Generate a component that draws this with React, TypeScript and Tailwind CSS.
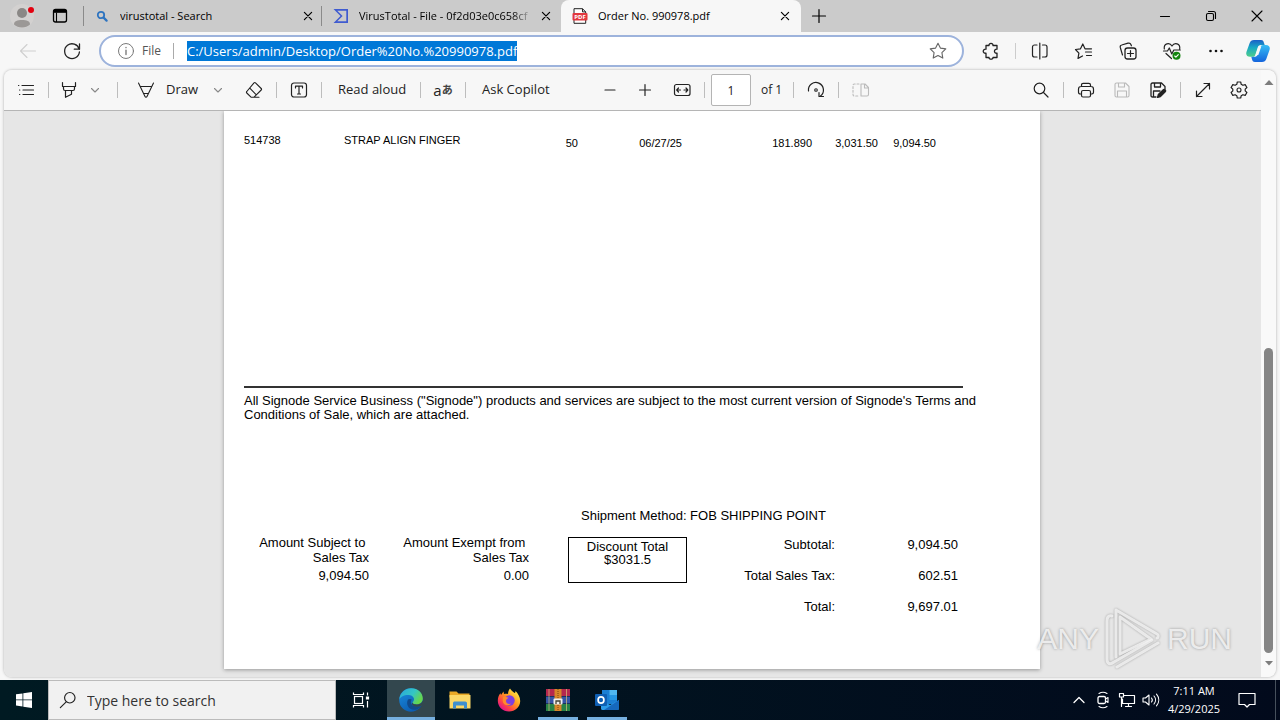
import type { ReactNode } from "react";

type IconProps = { children: ReactNode; className?: string; box?: string };

function Icon({ children, className = "size-5", box = "0 0 20 20" }: IconProps) {
  return (
    <svg
      viewBox={box}
      className={`${className} block shrink-0`}
      fill="none"
      stroke="currentColor"
      strokeWidth={1.1}
      strokeLinecap="round"
      strokeLinejoin="round"
      aria-hidden="true"
    >
      {children}
    </svg>
  );
}

function Tool({ label, className = "", children }: { label: string; className?: string; children: ReactNode }) {
  return (
    <button type="button" aria-label={label} className={`flex shrink-0 items-center justify-center ${className}`}>
      {children}
    </button>
  );
}

function Sep({ className = "" }: { className?: string }) {
  return <span className={`w-px shrink-0 ${className}`} />;
}

const CloseGlyph = () => (
  <Icon className="size-3">
    <path d="M4 4l12 12M16 4L4 16" strokeWidth={2} />
  </Icon>
);

const Chevron = () => (
  <Icon className="size-[10px]" box="0 0 10 10">
    <path d="M1.500 3.500L5 7l3.500-3.500" stroke="#888" />
  </Icon>
);

function TitleBar() {
  return (
    <header className="flex h-8 shrink-0 items-center bg-[#cbcbcb] text-black">
      <Tool label="Profile" className="ml-2.5">
        <svg viewBox="0 0 28 28" className="size-7" aria-hidden="true">
          <circle cx="12" cy="14" r="12" fill="#d3d1d0" />
          <circle cx="12" cy="11" r="5" fill="#8b8886" />
          <path d="M4 22.500c0-3.600 3.300-4.500 8-4.500s8 .9 8 4.500c-2 1.900-4.900 2.900-8 2.900s-6-1-8-2.900z" fill="#9b9896" />
          <circle cx="21" cy="8" r="3" fill="#e3000f" />
        </svg>
      </Tool>
      <Tool label="Tab actions" className="ml-3">
        <Icon>
          <rect x="3.500" y="3.500" width="13" height="12.500" rx="2" strokeWidth={1.3} />
          <path d="M4 4.500h12v1.800H4z" fill="currentColor" />
          <path d="M6.500 7v8.500" />
        </Icon>
      </Tool>
      <Sep className="ml-[13px] h-5 bg-[#8a8a8a]" />
      <div className="ml-3 flex w-[225px] items-center">
        <Icon className="size-3" box="0 0 12 12">
          <circle cx="5" cy="5" r="3.200" stroke="#2e74c0" strokeWidth={1.8} />
          <path d="M7.600 7.600L10.600 10.600" stroke="#2e74c0" strokeWidth={2.200} />
        </Icon>
        <span className="ml-3 flex-1 truncate text-[11px]">virustotal - Search</span>
        <Tool label="Close tab" className="mr-[7px]">
          <CloseGlyph />
        </Tool>
      </div>
      <Sep className="h-5 bg-[#8a8a8a]" />
      <div className="flex w-[239px] items-center pl-[11px]">
        <Icon className="size-4" box="0 0 16 16">
          <path d="M.5 1h14.500v14H.5l7-7z" fill="#3f5bd0" stroke="none" />
          <path d="M4.300 2.700h9v10.600h-9L9.600 8z" fill="#cbcbcb" stroke="none" />
        </Icon>
        <span className="ml-2.5 w-[174px] text-[11px] whitespace-nowrap [mask-image:linear-gradient(to_right,#000_88%,transparent)]">
          VirusTotal - File - 0f2d03e0c658cf
        </span>
        <Tool label="Close tab" className="ml-[7px]">
          <CloseGlyph />
        </Tool>
      </div>
      <div className="flex h-8 w-[240px] items-center rounded-t-lg bg-[#f7f7f7] pl-[11px]">
        <svg viewBox="0 0 16 16" className="size-4 shrink-0" aria-hidden="true">
          <path d="M2 .7h8.500l3.200 3.200v11.400H2z" fill="#fff" stroke="#222" />
          <path d="M10.500.7v3.200h3.200" fill="none" stroke="#222" />
          <rect x=".5" y="5" width="15" height="7.500" rx="1" fill="#e2383f" />
          <text x="8" y="11" textAnchor="middle" fontSize="6" fontWeight="bold" fill="#fff">
            PDF
          </text>
        </svg>
        <span className="ml-2.5 flex-1 text-[11px]">Order No. 990978.pdf</span>
        <Tool label="Close tab" className="mr-2.5">
          <CloseGlyph />
        </Tool>
      </div>
      <Tool label="New tab" className="ml-2.5">
        <Icon className="size-4" box="0 0 16 16">
          <path d="M8 1.500v13M1.500 8h13" strokeWidth={1.200} />
        </Icon>
      </Tool>
      <div className="mr-[17px] ml-auto flex items-center gap-[34px]">
        <Tool label="Minimize">
          <Icon className="size-3" box="0 0 12 12">
            <path d="M1.500 6.500h9" />
          </Icon>
        </Tool>
        <Tool label="Restore">
          <Icon className="size-3" box="0 0 12 12">
            <rect x="1.500" y="3.500" width="7" height="7" rx="1.500" />
            <path d="M3.500 1.500h5c1.200 0 2 .8 2 2v5" />
          </Icon>
        </Tool>
        <Tool label="Close window">
          <Icon className="size-3" box="0 0 12 12">
            <path d="M1 1l10 10M11 1L1 11" />
          </Icon>
        </Tool>
      </div>
    </header>
  );
}

function AddressBar() {
  return (
    <div className="flex h-[38px] shrink-0 items-center bg-[#f7f7f7] text-[#222]">
      <Tool label="Back" className="ml-[18px] text-[#cfcfcf]">
        <Icon>
          <path d="M17.500 10h-15M9 3.500L2.500 10 9 16.500" />
        </Icon>
      </Tool>
      <Tool label="Refresh" className="ml-6">
        <Icon>
          <path d="M17.200 8.300A7.400 7.400 0 1 0 17.400 11M17.500 3v5.200h-5.200" strokeWidth={1.300} />
        </Icon>
      </Tool>
      <div className="ml-[17px] flex h-8 flex-1 items-center rounded-full border-2 border-[#9db3dc] bg-white">
        <Icon className="ml-4 size-[18px]">
          <g stroke="#777">
            <circle cx="10" cy="10" r="8.300" />
            <path d="M10 9v5M10 6v.3" strokeWidth={1.500} />
          </g>
        </Icon>
        <label htmlFor="address" className="ml-[7px] w-5 text-[12px] text-[#555]">
          File
        </label>
        <Sep className="ml-[11px] h-4 bg-[#aaa]" />
        <input
          id="address"
          readOnly
          value="C:/Users/admin/Desktop/Order%20No.%20990978.pdf"
          className="ml-[13px] h-5 field-sizing-content bg-[#0078d7] text-[13px] text-white outline-none"
        />
        <Tool label="Add to favorites" className="mr-[14px] ml-auto text-[#666]">
          <Icon>
            <path d="M10 2.200l2.400 4.900 5.400.8-3.900 3.800.9 5.400-4.800-2.600-4.800 2.600.9-5.400-3.900-3.800 5.400-.8z" />
          </Icon>
        </Tool>
      </div>
      <Tool label="Extensions" className="ml-[17px]">
        <Icon>
          <path
            d="M5 4.500h3c-.5-2.800 4.500-2.800 4 0h4v3.700c-3.400-.4-3.400 4.400 0 4v4.300h-4c.3 2.200-4.300 2.200-4 0H5v-4.300c-3.700.4-3.700-4.400 0-4z"
            strokeWidth={1.300}
          />
        </Icon>
      </Tool>
      <Sep className="ml-3.5 h-4 bg-[#ccc]" />
      <div className="ml-3.5 flex items-center gap-6">
        <Tool label="Split screen">
          <Icon>
            <path d="M7 4H4.500A2 2 0 0 0 2.500 6v8a2 2 0 0 0 2 2H7M12.500 4h2.500a2 2 0 0 1 2 2v8a2 2 0 0 1-2 2h-2.500M9.800 2v16" strokeWidth={1.200} />
          </Icon>
        </Tool>
        <Tool label="Favorites">
          <Icon>
            <path d="M8.500 15l-4.500 2.400.9-5.200L1.500 8.500l5-.7L8.800 3l2.200 4.800H17.500M11.500 11h6M12.500 14.500h5" strokeWidth={1.200} />
          </Icon>
        </Tool>
        <Tool label="Collections">
          <Icon>
            <rect x="7" y="7" width="11" height="11" rx="2.500" strokeWidth={1.300} />
            <path d="M12.500 9.500v6M9.500 12.500h6M4.500 14L2.300 6.500C2 5.300 2.500 4.300 3.700 4L10 2.200c1.500-.4 2.500.2 2.900 1.300l.5 1.300" strokeWidth={1.200} />
          </Icon>
        </Tool>
        <Tool label="Browser essentials">
          <Icon>
            <path d="M2.300 8C1.500 2.500 7.500 1 10 5c2.500-4 8.500-2.500 7.700 3M1.500 10h4l1.800-3 2.500 6 2-4h6.500M4 12.500l5.500 5" strokeWidth={1.200} />
            <circle cx="14.500" cy="14.800" r="4" fill="#13850f" stroke="none" />
            <path d="M12.700 15l1.200 1.200 2.400-2.600" stroke="#fff" />
          </Icon>
        </Tool>
        <Tool label="Settings and more">
          <Icon>
            <g fill="#111" stroke="none">
              <circle cx="4.500" cy="10" r="1.300" />
              <circle cx="10" cy="10" r="1.300" />
              <circle cx="15.500" cy="10" r="1.300" />
            </g>
          </Icon>
        </Tool>
      </div>
      <Tool label="Copilot" className="mr-2.5 ml-5">
        <svg viewBox="0 0 24 24" className="size-6" aria-hidden="true">
          <defs>
            <linearGradient id="cpA" x1="0" y1="0" x2="0" y2="1">
              <stop offset="0" stopColor="#1b5fc8" />
              <stop offset=".45" stopColor="#19a9c4" />
              <stop offset="1" stopColor="#4fce8a" />
            </linearGradient>
            <linearGradient id="cpB" x1="0" y1="0" x2="0" y2="1">
              <stop offset="0" stopColor="#36bdf5" />
              <stop offset="1" stopColor="#1464dc" />
            </linearGradient>
          </defs>
          <path d="M8 1h7c2 0 2.500 1 3 3l.7 2H15c-2 0-2.800 1-3.300 2.500L9.300 16c-.4 1.200-1.200 1.800-2.500 1.800H4c-3 0-4.500-2-3.500-5L3.700 4C4.400 2 5.700 1 8 1z" fill="url(#cpA)" />
          <path d="M16 23H9c-2 0-2.600-1-3.100-3l-.6-2.200H8c2 0 3.200-.8 3.800-2.600L14.500 8c.4-1.300 1.200-2 2.500-2h3c3 0 4.500 2 3.500 5l-3.200 9c-.7 2-2 3-4.300 3z" fill="url(#cpB)" />
          <path d="M12.500 7.500h2.800l-3 8.500H9.500z" fill="#f7f7f7" />
        </svg>
      </Tool>
    </div>
  );
}

function PdfToolbar() {
  const sep = "h-4 bg-[#bdbdbd]";
  return (
    <div className="flex h-[41px] shrink-0 items-center border-b border-[#b5b5b5] bg-[#f7f7f7] text-[13px] text-[#222]">
      <Tool label="Table of contents" className="ml-3">
        <Icon>
          <path d="M6 5.500h11.500M7 10h10.500M7 14.500h10.500M2.500 5.500h.3M3.500 10h.3M3.500 14.500h.3" strokeWidth={1.200} />
        </Icon>
      </Tool>
      <Sep className={`ml-3 ${sep}`} />
      <Tool label="Highlight" className="ml-[10px]">
        <Icon>
          <path d="M3.500 2.500v4h13v-4M4.500 6.500v2.200c0 1 .6 1.800 1.500 1.800h8c.9 0 1.500-.8 1.500-1.800V6.500M6.500 10.500v6.800l6-3v-3.800" strokeWidth={1.200} />
        </Icon>
      </Tool>
      <Tool label="Highlight options" className="ml-[11px]">
        <Chevron />
      </Tool>
      <Sep className={`ml-[17px] ${sep}`} />
      <button type="button" className="ml-[18px] flex shrink-0 items-center gap-[10px]">
        <Icon>
          <path d="M2.500 3L9 16.500c.5 1 1.500 1 2 0L17.500 3M4.500 6.500h11M7.700 13.500h4.600" strokeWidth={1.100} />
        </Icon>
        <span className="w-[34px] text-left">Draw</span>
      </button>
      <Tool label="Draw options" className="ml-[13px]">
        <Chevron />
      </Tool>
      <Tool label="Erase" className="ml-[21px]">
        <Icon>
          <path d="M11.500 2.800l5.700 5.700c.5.500.5 1 0 1.500L10 17.200H7L2.800 13c-.5-.5-.5-1 0-1.500l7.200-8.700c.5-.5 1-.5 1.500 0zM5.800 8.200l6.300 6.500M10 17.200h5" />
        </Icon>
      </Tool>
      <Sep className={`ml-3 ${sep}`} />
      <Tool label="Add text" className="ml-3">
        <Icon>
          <rect x="2.500" y="3" width="15" height="14" rx="2.500" strokeWidth={1.200} />
          <path d="M6.500 8V6.200h7V8M10 6.200v7.800M8.500 14h3" strokeWidth={1.200} />
        </Icon>
      </Tool>
      <Sep className={`ml-3 ${sep}`} />
      <button type="button" className="ml-4 w-[70px] text-left whitespace-nowrap">
        Read aloud
      </button>
      <Sep className={`ml-3 ${sep}`} />
      <Tool label="Translate" className="ml-3 w-5 font-['Open_Sans','Noto_Sans_CJK_JP',sans-serif]">
        <span className="text-[15px] leading-5">a</span>
        <span className="text-[11px] leading-5 font-bold text-[#444]">あ</span>
      </Tool>
      <Sep className={`ml-3 ${sep}`} />
      <button type="button" className="ml-4 w-[72px] text-left whitespace-nowrap">
        Ask Copilot
      </button>
      <Tool label="Zoom out" className="ml-[46px]">
        <Icon>
          <path d="M5 10h10" strokeWidth={1.200} />
        </Icon>
      </Tool>
      <Tool label="Zoom in" className="ml-[15px]">
        <Icon>
          <path d="M10 4.500v11M4.500 10h11" strokeWidth={1.200} />
        </Icon>
      </Tool>
      <Tool label="Fit to width" className="ml-[17px]">
        <Icon>
          <rect x="2.500" y="4.500" width="15.500" height="11" rx="2" strokeWidth={1.200} />
          <path d="M5 10h3.500M12 10h3.500M6.500 8L4.700 10l1.800 2M14 8l1.800 2-1.800 2" strokeWidth={1.200} />
        </Icon>
      </Tool>
      <Sep className={`ml-3 ${sep}`} />
      <input
        aria-label="Page number"
        defaultValue="1"
        className="ml-1.5 h-8 w-10 shrink-0 rounded-xs border border-[#b4b4b4] bg-white text-center text-[12px] outline-none"
      />
      <span className="ml-2.5 w-5 text-[12px] whitespace-nowrap">of 1</span>
      <Sep className={`ml-3 ${sep}`} />
      <Tool label="Rotate" className="ml-3">
        <Icon>
          <path d="M2.500 11A7.500 7.500 0 1 1 14.500 16M13 12.500v4h4.500" strokeWidth={1.200} />
          <circle cx="10" cy="10" r="1.300" />
        </Icon>
      </Tool>
      <Sep className={`ml-3 ${sep}`} />
      <Tool label="Page view" className="ml-3 text-[#bbb]">
        <Icon>
          <path d="M8 4H3.500c-1 0-1.500.5-1.500 1.500v9c0 1 .5 1.500 1.500 1.500H8" strokeDasharray="2 1.800" />
          <path d="M10 4h4l3.500 3.500V14.500c0 1-.5 1.500-1.500 1.500h-6zM13.500 4v4h4" />
        </Icon>
      </Tool>
      <Tool label="Find" className="mr-3 ml-auto">
        <Icon>
          <circle cx="8.500" cy="8.500" r="5.300" strokeWidth={1.200} />
          <path d="M12.500 12.500l4.500 4.500" strokeWidth={1.200} />
        </Icon>
      </Tool>
      <Sep className={sep} />
      <div className="mx-3 flex gap-4">
        <Tool label="Print">
          <Icon>
            <path d="M5.500 6.500V5c0-1 .7-1.700 1.700-1.700h5.600c1 0 1.700.7 1.700 1.700v1.500M5.500 14H4.200c-1 0-1.700-.7-1.700-1.700V9c0-1.500 1-2.500 2.500-2.500h10c1.500 0 2.500 1 2.500 2.500v3.300c0 1-.7 1.700-1.700 1.700h-1.300" strokeWidth={1.200} />
            <rect x="5.500" y="10.500" width="9" height="6.500" rx="1.500" strokeWidth={1.200} />
          </Icon>
        </Tool>
        <Tool label="Save" className="text-[#bababa]">
          <Icon>
            <path d="M4.500 3h9L17 6.500v9c0 1-.5 1.500-1.500 1.500h-11C3.500 17 3 16.500 3 15.500v-11C3 3.500 3.500 3 4.500 3zM6.500 3v4h6V3M5.500 17v-6h9v6" />
          </Icon>
        </Tool>
        <Tool label="Save as">
          <Icon>
            <path d="M8 17H4.500C3.500 17 3 16.500 3 15.500v-11C3 3.500 3.500 3 4.500 3h9L17 6.500V9M6.500 3v4h6V3M5.500 17v-6H12" strokeWidth={1.300} />
            <path d="M9.500 17.500l.8-3 5.200-5c1-.8 3 1 2 2.200l-5 5z" fill="currentColor" />
          </Icon>
        </Tool>
      </div>
      <Sep className={sep} />
      <div className="mx-3 flex gap-4">
        <Tool label="Full screen">
          <Icon>
            <path d="M3.500 16.500l13-13M11 3.500h5.500V9M3.500 11v5.500H9" strokeWidth={1.200} />
          </Icon>
        </Tool>
        <Tool label="Settings">
          <Icon>
            <path
              d="M8.300 2h3.400l.5 2.300 1.700 1 2.300-.7 1.700 2.900-1.700 1.600v1.800l1.700 1.600-1.700 2.900-2.300-.7-1.700 1-.5 2.300H8.300l-.5-2.300-1.700-1-2.300.7-1.700-2.900 1.700-1.600V9.100L2.100 7.500l1.700-2.900 2.300.7 1.700-1z"
              strokeWidth={1.200}
            />
            <circle cx="10" cy="10" r="2" />
          </Icon>
        </Tool>
      </div>
    </div>
  );
}

const totals = [
  ["Subtotal:", "9,094.50"],
  ["Total Sales Tax:", "602.51"],
  ["Total:", "9,697.01"],
];

function Invoice() {
  return (
    <main className="flex w-[816px] flex-col bg-white px-5 font-['Liberation_Sans',sans-serif] text-[13px] text-black shadow-[0_1px_4px_rgba(0,0,0,0.35)]">
      <table className="mt-[23px] mb-auto w-[692px] table-fixed text-[11px] leading-[13px]">
        <tbody>
          <tr className="align-top">
            <td className="w-[100px]">514738</td>
            <td className="w-[214px]">STRAP ALIGN FINGER</td>
            <td className="w-[20px] pt-[3px] text-right">50</td>
            <td className="w-[104px] pt-[3px] text-right">06/27/25</td>
            <td className="w-[130px] pt-[3px] text-right">181.890</td>
            <td className="w-[66px] pt-[3px] text-right">3,031.50</td>
            <td className="pt-[3px] text-right">9,094.50</td>
          </tr>
        </tbody>
      </table>
      <p className="w-[719px] border-t-2 border-[#333] pt-1.5 leading-[14px] whitespace-nowrap">
        All Signode Service Business ("Signode") products and services are subject to the most current version of
        Signode's Terms and
        <br />
        Conditions of Sale, which are attached.
      </p>
      <p className="mt-[86px] ml-[337px] leading-4">Shipment Method: FOB SHIPPING POINT</p>
      <section className="mt-[11px] mb-[52px] flex h-[82px] items-start leading-[15px]">
        <div className="flex w-[125px] flex-col items-end">
          <span className="whitespace-pre">Amount Subject to </span>
          <span>Sales Tax</span>
          <span className="mt-[3px]">9,094.50</span>
        </div>
        <div className="ml-[34px] flex w-[126px] flex-col items-end">
          <span className="whitespace-pre">Amount Exempt from </span>
          <span>Sales Tax</span>
          <span className="mt-[3px]">0.00</span>
        </div>
        <div className="mt-[2px] ml-[39px] h-[46px] w-[119px] border border-black pt-[2px] text-center leading-[13px]">
          Discount Total
          <br />
          $3031.5
        </div>
        <dl className="mt-[2px] grid grid-cols-[148px_123px] gap-y-4 text-right">
          {totals.map(([label, value]) => (
            <div key={label} className="contents">
              <dt>{label}</dt>
              <dd>{value}</dd>
            </div>
          ))}
        </dl>
      </section>
    </main>
  );
}

function Scrollbar() {
  return (
    <div className="flex w-[15px] shrink-0 flex-col items-center rounded-r-lg bg-[#f9f9f9] pt-2 pb-2.5">
      <svg viewBox="0 0 10 8" className="h-2 w-[10px]" aria-hidden="true">
        <path d="M5 2l4.500 5h-9z" fill="#7d7d7d" />
      </svg>
      <div className="flex-1" />
      <div className="mb-1.5 h-[305px] w-[9px] rounded-full bg-[#858585]" />
      <svg viewBox="0 0 10 8" className="h-2 w-[10px]" aria-hidden="true">
        <path d="M5 6.500L1 2h8z" fill="#7d7d7d" />
      </svg>
    </div>
  );
}

function Watermark() {
  const word =
    "font-['Liberation_Sans',sans-serif] text-[30px] leading-none text-[#f4f4f4]/90 [text-shadow:0_0_3px_rgba(0,0,0,0.35)]";
  return (
    <div className="pointer-events-none absolute right-11 bottom-1.5 flex items-center">
      <span className={word}>ANY</span>
      <svg viewBox="0 0 60 64" className="mx-1 h-16 w-[60px] drop-shadow-[0_0_1px_rgba(0,0,0,0.35)]" fill="none" stroke="#f3f3f3" strokeOpacity=".85" strokeWidth="3" strokeLinejoin="round" strokeLinecap="round" aria-hidden="true">
        <path d="M13 50V3l41 24c2 1 1 4 0 4" />
        <path d="M9 9C5 8 4 11 4 14v38c0 5 3 6 7 3l38-22" />
        <path d="M17 10v37l31-15zM14 60l41-24" />
      </svg>
      <span className={word}>RUN</span>
    </div>
  );
}

function Task({ label, state = "", children }: { label: string; state?: string; children: ReactNode }) {
  return (
    <button type="button" aria-label={label} className={`flex h-10 shrink-0 items-center justify-center ${state}`}>
      {children}
    </button>
  );
}

function Taskbar() {
  return (
    <footer className="flex h-10 shrink-0 bg-linear-to-r from-[#001a22] to-[#020a1c] text-white">
      <Task label="Start" state="w-12">
        <svg viewBox="0 0 16 16" className="size-4" fill="#fff" aria-hidden="true">
          <path d="M0 2.300l6.500-.9v6.100H0zM7.300 1.300L16 0v7.500H7.300zM0 8.300h6.500v6.200L0 13.600zM7.300 8.300H16V16l-8.700-1.300z" />
        </svg>
      </Task>
      <label className="flex w-72 shrink-0 items-center border border-[#bbb] bg-[#f1f1f1] pl-[10px] text-[#222]">
        <Icon className="size-[18px]">
          <circle cx="12" cy="7.500" r="5.800" strokeWidth={1.300} />
          <path d="M8 12L1.500 18.500" strokeWidth={1.300} />
        </Icon>
        <input
          aria-label="Search"
          placeholder="Type here to search"
          className="ml-[10px] w-56 bg-transparent text-[14px] outline-none placeholder:text-[#333]"
        />
      </label>
      <Task label="Task view" state="w-[49px]">
        <svg viewBox="0 0 18 18" className="size-[18px]" fill="none" stroke="#fff" strokeWidth="1.200" aria-hidden="true">
          <rect x="2.500" y="5.500" width="8" height="7" />
          <path d="M1.500 1.500v2h10v-2M1.500 16.500v-2h10v2M15.500 1.500v3M15.500 10v6.500" />
          <path d="M14.500 6h2v2h-2z" fill="#fff" />
        </svg>
      </Task>
      <Task label="Microsoft Edge" state="ml-[2px] w-12 border-y-3 border-t-[#33474e] border-b-[#76b0e0] bg-[#33474e]">
        <svg viewBox="0 0 24 24" className="size-6" aria-hidden="true">
          <defs>
            <linearGradient id="edA" x1="0" y1="0" x2="1" y2=".5">
              <stop offset="0" stopColor="#2aa5dc" />
              <stop offset=".6" stopColor="#34c6c4" />
              <stop offset="1" stopColor="#67d64b" />
            </linearGradient>
            <linearGradient id="edB" x1="0" y1="0" x2=".6" y2="1">
              <stop offset="0" stopColor="#1b8ee0" />
              <stop offset="1" stopColor="#0c5cb0" />
            </linearGradient>
          </defs>
          <circle cx="12" cy="12" r="11.800" fill="url(#edB)" />
          <path d="M.3 11.500C1 4.500 6.300.2 12.200.2 19 .2 23.800 5 23.800 10.500c0 3.800-2.800 6-6 6-2.600 0-4.300-1-4.300-2 0-.7 1.500-1.200 1.500-3.300C15 8.500 12 7 8.800 7 5 7 1.300 8.800.3 11.500z" fill="url(#edA)" />
          <path d="M9 11.500c-2.500 4.500.5 11 7.500 10.200 2.600-.4 4.800-2 6-4-2.800 1.300-6.500 1.300-9-.5-1.700-1.200-2.300-3.500-.8-5.700-1-.8-2.700-.8-3.700 0z" fill="#114a8b" />
          <path d="M13.500 14.500c0 1 1.700 2 4.300 2 2.500 0 5-1.300 5.800-3.800.8 1.300.8 3.500-1 5-3 1.500-6.500 1.200-8.800-.3-1-.8-1.300-2-.3-2.900z" fill="#33474e" />
        </svg>
      </Task>
      <Task label="File Explorer" state="w-[49px]">
        <svg viewBox="0 0 24 24" className="size-6" aria-hidden="true">
          <path d="M1.500 3.500h7l2 2h11v4h-20z" fill="#e9a825" />
          <path d="M1.500 7h21v13.500h-21z" fill="#fbd766" />
          <path d="M5 20.500v-5.300c0-1 .8-1.700 1.800-1.700h10.400c1 0 1.800.8 1.800 1.700v5.300h-3v-3H8v3z" fill="#3f8fcf" />
        </svg>
      </Task>
      <Task label="Firefox" state="w-[49px]">
        <svg viewBox="0 0 24 24" className="size-6" aria-hidden="true">
          <defs>
            <linearGradient id="ffA" x1=".9" y1=".1" x2=".2" y2=".9">
              <stop offset="0" stopColor="#fff04a" />
              <stop offset=".45" stopColor="#ff9a1f" />
              <stop offset=".75" stopColor="#ff4a3f" />
              <stop offset="1" stopColor="#e31587" />
            </linearGradient>
          </defs>
          <path d="M13 .5c1 2 3 3 4.500 4.500 1-.3 1-1.500 1-2 2.500 2.500 4.700 6 4.700 10C23.200 19 18 23.500 12 23.500S.8 19 .8 12.700C.8 9.500 2 6.800 3.500 5.300L4 7l2.500-3.500L7 6c1.300-.5 3-.5 4 0 0-2.500 1-4.500 2-5.500z" fill="url(#ffA)" />
          <circle cx="12.500" cy="12.500" r="5.200" fill="#7c3fe0" />
          <path d="M6 9c2-1 4 .3 5.500.5-1 1.500-2.500 1.500-2.500 3.500 0 2.500 3 3.500 5 2.500-2 3-8 2-8.300-2.500z" fill="#ff8a2a" />
        </svg>
      </Task>
      <Task label="WinRAR" state="ml-[5px] w-10 border-y-3 border-t-transparent border-b-[#76b0e0]">
        <svg viewBox="0 0 24 24" className="size-6" aria-hidden="true">
          <path d="M0 1h24v7H0z" fill="#b5284f" />
          <path d="M0 8.500h24v7H0z" fill="#3554a5" />
          <path d="M0 16h24v7H0z" fill="#278247" />
          <path d="M3 1v22M20.500 1v22" stroke="#d8c17a" strokeOpacity=".7" />
          <path d="M8.500 1h7v22h-7z" fill="#d7862b" />
          <path d="M12 1v22" stroke="#7b4310" strokeDasharray="1 1" />
          <rect x="7.500" y="10.500" width="9" height="6" rx="1" fill="#eee" />
          <path d="M10 16v-3h4v3" fill="none" stroke="#443" strokeWidth="1.300" />
        </svg>
      </Task>
      <Task label="Outlook" state="ml-[9px] w-10 border-y-3 border-t-transparent border-b-[#76b0e0]">
        <svg viewBox="0 0 24 24" className="size-6" aria-hidden="true">
          <path d="M7 2h15v14H7z" fill="#1b7fd4" />
          <path d="M14.500 2H22v5h-7.500z" fill="#50b8f0" />
          <path d="M14.500 7H22v5h-7.500z" fill="#2697e3" />
          <path d="M6 12l9 5 9-5v8.500c0 .8-.7 1.500-1.500 1.500h-15C6.700 22 6 21.300 6 20.500z" fill="#2d9be8" />
          <path d="M24 12L9 22h13.500c.8 0 1.500-.7 1.500-1.500z" fill="#1668bd" />
          <rect x="0" y="6" width="12" height="12" rx="1" fill="#0f5fb3" />
          <ellipse cx="6" cy="12" rx="2.900" ry="3.200" fill="none" stroke="#fff" strokeWidth="1.700" />
        </svg>
      </Task>
      <div className="ml-auto flex shrink-0 items-center gap-1">
        <Tool label="Show hidden icons">
          <Icon>
            <path d="M5 12.500l5-5 5 5" strokeWidth={1.300} />
          </Icon>
        </Tool>
        <Tool label="Meet now">
          <Icon>
            <rect x="5" y="6.500" width="7.500" height="7" rx="1.500" strokeWidth={1.300} />
            <path d="M12.500 9l2.500-1.500v5L12.500 11M6 3.500c2.500-1.600 5.500-1.600 8 0M6 16.500c2.500 1.600 5.500 1.600 8 0" />
          </Icon>
        </Tool>
        <Tool label="Network">
          <Icon>
            <path d="M6.500 5.500h11v8H5.500V9M11.500 13.500v3M8.500 16.500h6M2.500 3.500h4V7h-4zM4.500 7v9.500" strokeWidth={1.200} />
          </Icon>
        </Tool>
        <Tool label="Volume">
          <Icon>
            <path d="M2 8h2.500L8 5v10l-3.500-3H2zM10.500 8c1 1.200 1 2.800 0 4M13 6c2 2.300 2 5.700 0 8M15.500 4.200c3 3.500 3 8.100 0 11.600" strokeWidth={1.100} />
          </Icon>
        </Tool>
        <div className="w-[58px] text-center text-[11px] leading-[18px]">
          7:11 AM
          <br />
          4/29/2025
        </div>
        <Tool label="Notifications" className="ml-2.5">
          <Icon>
            <path d="M2 3.500h16v11h-5.500L10 17l-2.500-2.500H2z" strokeWidth={1.200} />
          </Icon>
        </Tool>
        <span className="ml-3.5 h-10 w-[5px] border-l border-[#46505c]" />
      </div>
    </footer>
  );
}

export default function App() {
  return (
    <div className="flex h-screen min-h-[560px] flex-col overflow-hidden bg-[#f7f7f7] font-['Open_Sans','Noto_Sans',sans-serif]">
      <TitleBar />
      <AddressBar />
      <div className="relative mx-1 mb-[3px] flex min-h-0 flex-1 overflow-hidden rounded-lg shadow-[0_0_3px_rgba(0,0,0,0.3)]">
        <div className="flex min-w-0 flex-1 flex-col bg-[#e6e6e6]">
          <PdfToolbar />
          <div className="flex min-h-0 flex-1 justify-center overflow-hidden pr-px pb-2">
            <Invoice />
          </div>
        </div>
        <Scrollbar />
        <Watermark />
      </div>
      <Taskbar />
    </div>
  );
}
